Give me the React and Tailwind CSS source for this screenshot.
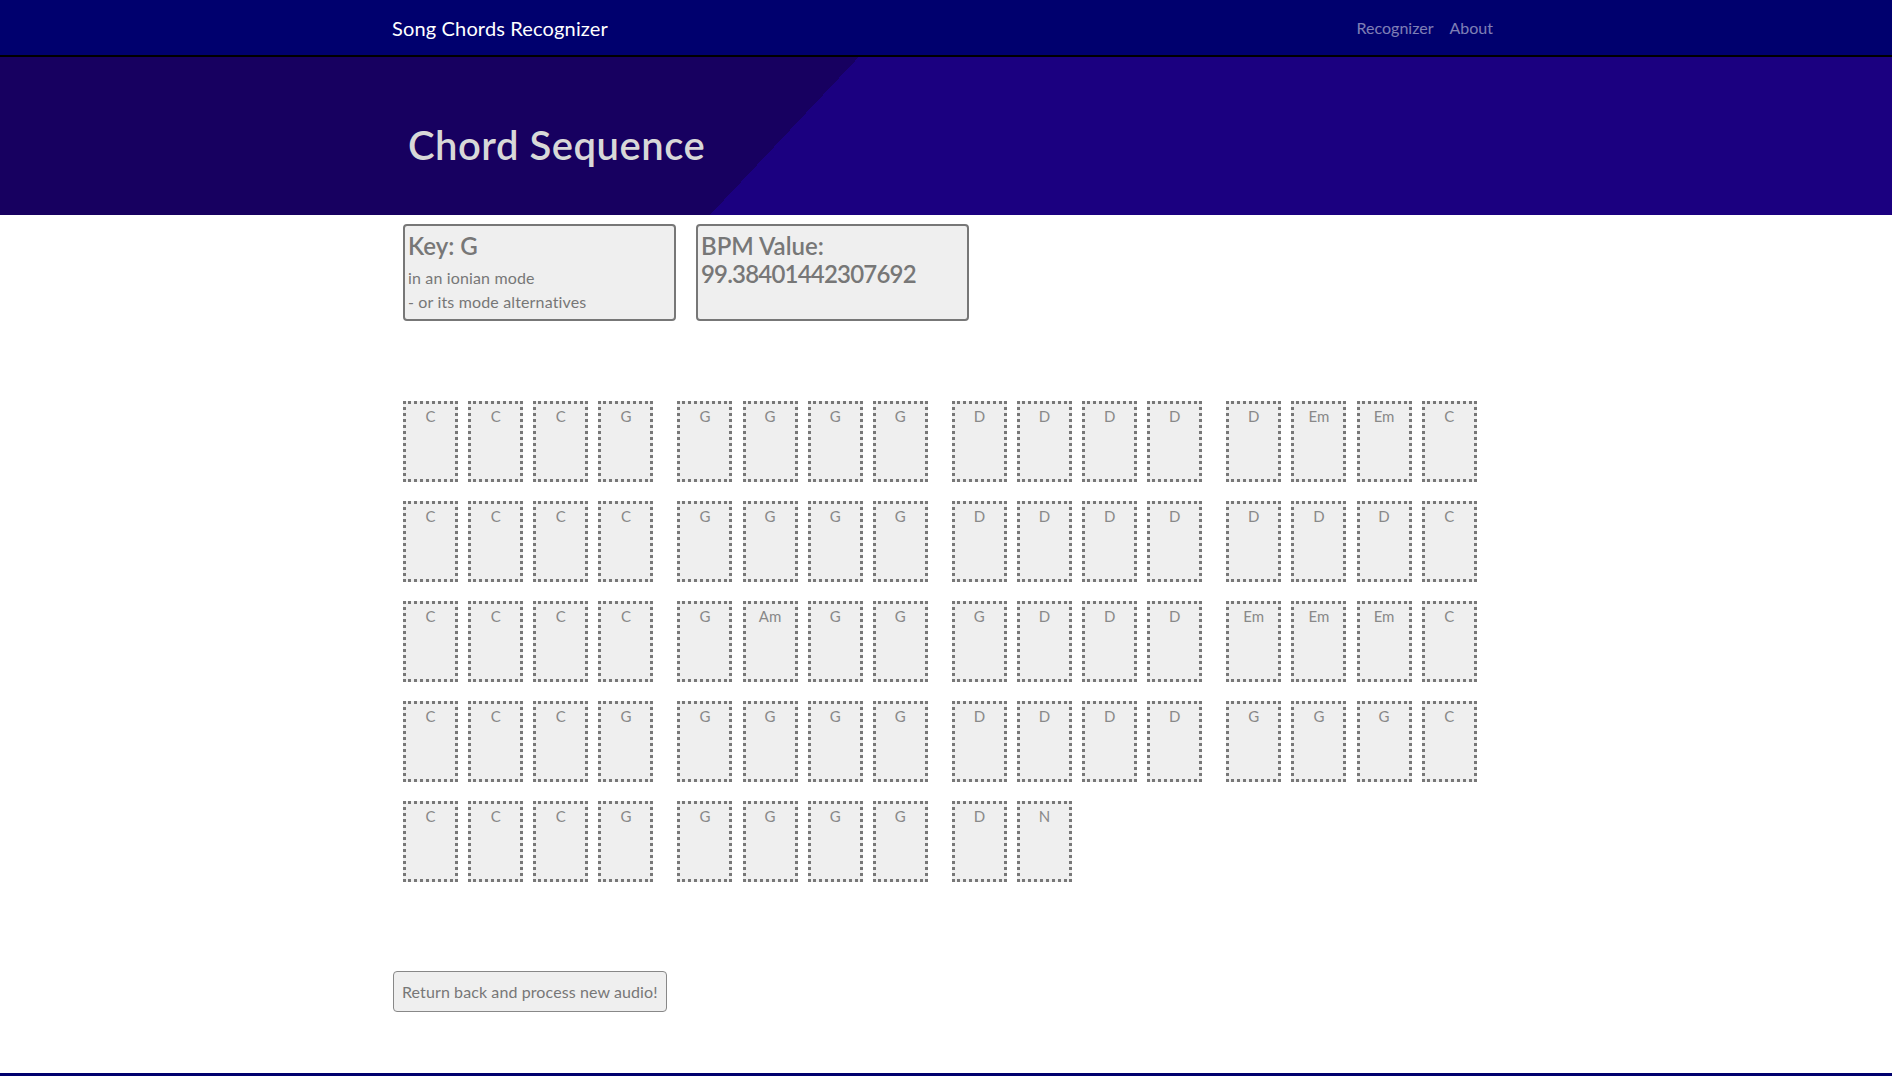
import React from 'react';

const ROWS = [
  [['C', 'C', 'C', 'G'], ['G', 'G', 'G', 'G'], ['D', 'D', 'D', 'D'], ['D', 'Em', 'Em', 'C']],
  [['C', 'C', 'C', 'C'], ['G', 'G', 'G', 'G'], ['D', 'D', 'D', 'D'], ['D', 'D', 'D', 'C']],
  [['C', 'C', 'C', 'C'], ['G', 'Am', 'G', 'G'], ['G', 'D', 'D', 'D'], ['Em', 'Em', 'Em', 'C']],
  [['C', 'C', 'C', 'G'], ['G', 'G', 'G', 'G'], ['D', 'D', 'D', 'D'], ['G', 'G', 'G', 'C']],
  [['C', 'C', 'C', 'G'], ['G', 'G', 'G', 'G'], ['D', 'N']],
];

function ChordBox({ chord }) {
  return (
    <div className="w-[55px] h-[81px] border-[3px] border-dotted border-[#777] bg-[#efefef] text-center text-[15px] leading-[24px] text-[#888]">
      {chord}
    </div>
  );
}

export default function App() {
  return (
    <div className="h-[1080px] overflow-hidden bg-white font-['Segoe_UI',Lato,sans-serif]">
      <nav className="h-[57px] bg-[#00006e] border-b-2 border-black">
        <div className="w-[1140px] mx-auto px-[15px] h-full flex items-center justify-between">
          <span className="pl-[1px] text-[20px] tracking-[0.15px] text-white">Song Chords Recognizer</span>
          <div className="flex text-[16px] text-white/50">
            <span className="px-2">Recognizer</span>
            <span className="px-2">About</span>
          </div>
        </div>
      </nav>

      <header className="h-[158px] bg-[linear-gradient(133.3deg,#170060_625px,#1b0080_625px)]">
        <div className="w-[1140px] mx-auto px-[15px] pt-[64px]">
          <h1 className="pl-[17px] text-[40px] leading-[48px] font-semibold tracking-[0.5px] text-[#d8d8d8]">Chord Sequence</h1>
        </div>
      </header>

      <main className="w-[1140px] mx-auto px-[15px]">
        <div className="flex gap-5 pl-3 pt-[9px]">
          <div className="w-[273px] h-[97px] border-2 border-[#777] rounded bg-[#efefef] px-[3px] pt-[5px] text-[#777]">
            <h4 className="text-[24px] leading-[29px] font-semibold mb-[6px]">Key: G</h4>
            <p className="text-[16px] leading-[24px] tracking-[0.15px]">in an ionian mode</p>
            <p className="text-[16px] leading-[24px] tracking-[0.15px]">- or its mode alternatives</p>
          </div>
          <div className="w-[273px] h-[97px] border-2 border-[#777] rounded bg-[#efefef] px-[3px] pt-[6px] text-[#777]">
            <h4 className="text-[24px] leading-[28px] font-semibold">BPM Value:</h4>
            <h4 className="text-[24px] leading-[28px] font-semibold tracking-[-0.8px]">99.38401442307692</h4>
          </div>
        </div>

        <div className="pl-3 pt-[80px] flex flex-col gap-y-[19px]">
          {ROWS.map((row, i) => (
            <div key={i} className="flex gap-x-[24px]">
              {row.map((bar, j) => (
                <div key={j} className="flex gap-x-[10.15px]">
                  {bar.map((c, k) => (
                    <ChordBox key={k} chord={c} />
                  ))}
                </div>
              ))}
            </div>
          ))}
        </div>

        <div className="pt-[89px] pl-[2px]">
          <button className="h-[41px] px-[8px] border border-[#888] rounded bg-[#efefef] text-[16px] tracking-[0.1px] text-[#777]">
            Return back and process new audio!
          </button>
        </div>
      </main>

      <footer className="mt-[61px] border-t-[3px] border-[#00006e] h-[10px]" />
    </div>
  );
}
